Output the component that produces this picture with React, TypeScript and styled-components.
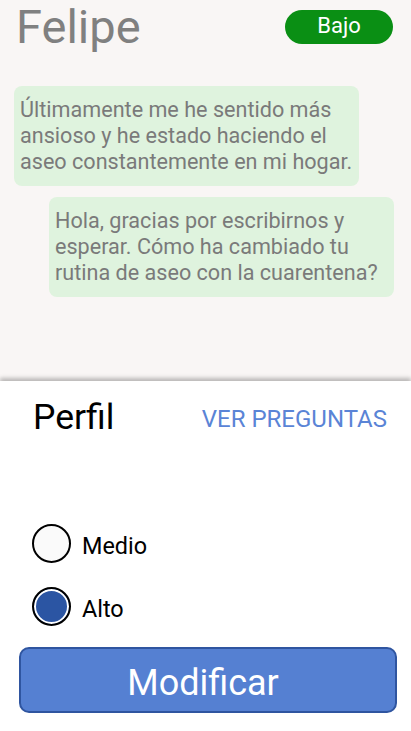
import styled, { createGlobalStyle } from "styled-components";
import { useState } from "react";

const GlobalStyle = createGlobalStyle`
  html, body {
    margin: 0;
    padding: 0;
    background: #ffffff;
    font-family: Roboto, "Noto Sans", sans-serif;
  }
`;

const messages = [
  { id: 1, mine: false, text: "Últimamente me he sentido más ansioso y he estado haciendo el aseo constantemente en mi hogar." },
  { id: 2, mine: true, text: "Hola, gracias por escribirnos y esperar. Cómo ha cambiado tu rutina de aseo con la cuarentena?" },
];

const levels = ["Medio", "Alto"];

const App = () => {
  const [level, setLevel] = useState("Alto");

  return (
    <>
      <GlobalStyle />
      <Screen>
        <Chat>
          <Header>
            <Name>Felipe</Name>
            <Badge>Bajo</Badge>
          </Header>
          <Messages>
            {messages.map((m) => (
              <Bubble key={m.id} mine={m.mine}>
                {m.text}
              </Bubble>
            ))}
          </Messages>
        </Chat>

        <Sheet>
          <SheetHeader>
            <Title>Perfil</Title>
            <LinkButton>VER PREGUNTAS</LinkButton>
          </SheetHeader>
          <Options>
            {levels.map((l) => (
              <Option key={l} onClick={() => setLevel(l)}>
                <Radio checked={level === l} />
                <OptionLabel>{l}</OptionLabel>
              </Option>
            ))}
          </Options>
          <SubmitButton>Modificar</SubmitButton>
        </Sheet>
      </Screen>
    </>
  );
};

const Screen = styled.div`
  display: flex;
  flex-direction: column;
  width: 411px;
  height: 731px;
  overflow: hidden;
`;

const Chat = styled.div`
  background-color: #f9f6f5;
  height: 381px;
  display: flex;
  flex-direction: column;
`;

const Header = styled.div`
  display: flex;
  justify-content: space-between;
  align-items: flex-start;
  padding: 0 18px 0 16px;
`;

const Name = styled.div`
  font-size: 47px;
  line-height: 54px;
  color: #808080;
`;

const Badge = styled.div`
  margin-top: 10px;
  width: 108px;
  height: 34px;
  border-radius: 17px;
  background-color: #0a8f14;
  color: #ffffff;
  font-size: 22px;
  display: flex;
  align-items: center;
  justify-content: center;
  padding-bottom: 3px;
  box-sizing: border-box;
`;

const Messages = styled.div`
  display: flex;
  flex-direction: column;
  gap: 11px;
  padding: 32px 17px 0 14px;
`;

const Bubble = styled.div<{ mine: boolean }>`
  align-self: ${({ mine }) => (mine ? "flex-end" : "flex-start")};
  width: 345px;
  box-sizing: border-box;
  padding: 11px 0 11px 6px;
  background-color: #dff3de;
  border-radius: 8px;
  color: #7a7a7a;
  font-size: 21.6px;
  line-height: 26px;
`;

const Sheet = styled.div`
  flex: 1;
  background-color: #ffffff;
  box-shadow: 0 -3px 4px rgba(0, 0, 0, 0.25);
  position: relative;
  display: flex;
  flex-direction: column;
  padding: 0 14px 0 19px;
`;

const SheetHeader = styled.div`
  display: flex;
  justify-content: space-between;
  align-items: baseline;
  padding: 15px 10px 0 14px;
`;

const Title = styled.div`
  font-size: 35.5px;
  color: #000000;
`;

const LinkButton = styled.div`
  font-size: 24px;
  color: #5a84d6;
  cursor: pointer;
  position: relative;
  top: -2px;
`;

const Options = styled.div`
  display: flex;
  flex-direction: column;
  gap: 24px;
  margin-top: 86px;
  padding-left: 13px;
`;

const Option = styled.div`
  display: flex;
  align-items: center;
  gap: 11px;
  cursor: pointer;
`;

const Radio = styled.div<{ checked: boolean }>`
  width: 39px;
  height: 39px;
  box-sizing: border-box;
  border-radius: 50%;
  border: 2px solid #000000;
  background-color: ${({ checked }) => (checked ? "#2b55a3" : "#fafafa")};
  box-shadow: ${({ checked }) => (checked ? "inset 0 0 0 2px #ffffff" : "none")};
`;

const OptionLabel = styled.div`
  font-size: 23.4px;
  color: #000000;
  padding-top: 5px;
`;

const SubmitButton = styled.button`
  margin-top: 21px;
  height: 66px;
  width: 378px;
  border-radius: 10px;
  border: 2px solid #2f55a0;
  background-color: #5580d2;
  color: #ffffff;
  font-family: Roboto, "Noto Sans", sans-serif;
  font-size: 36px;
  padding: 6px 10px 0 0;
  cursor: pointer;
`;

export default App;
